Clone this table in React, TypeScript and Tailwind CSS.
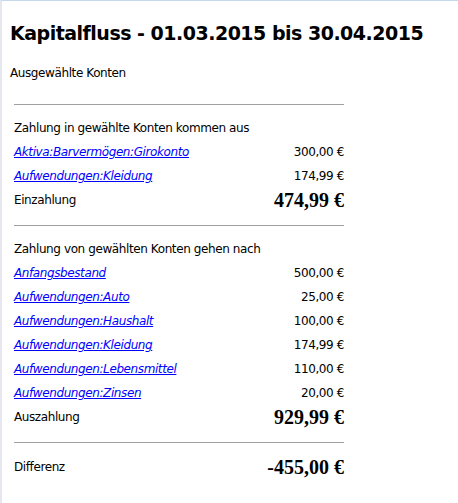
const body = "font-['DejaVu_Sans',Verdana,sans-serif]";

type Row = { name: string; amount: string };

const incoming: Row[] = [
  { name: 'Aktiva:Barvermögen:Girokonto', amount: '300,00 €' },
  { name: 'Aufwendungen:Kleidung', amount: '174,99 €' },
];

const outgoing: Row[] = [
  { name: 'Anfangsbestand', amount: '500,00 €' },
  { name: 'Aufwendungen:Auto', amount: '25,00 €' },
  { name: 'Aufwendungen:Haushalt', amount: '100,00 €' },
  { name: 'Aufwendungen:Kleidung', amount: '174,99 €' },
  { name: 'Aufwendungen:Lebensmittel', amount: '110,00 €' },
  { name: 'Aufwendungen:Zinsen', amount: '20,00 €' },
];

function LinkRow({ row }: { row: Row }) {
  return (
    <div className="flex h-[24px] items-center justify-between">
      <a href="#" className="italic text-[#0000ff] underline">
        {row.name}
      </a>
      <span>{row.amount}</span>
    </div>
  );
}

function TotalRow({ label, amount }: { label: string; amount: string }) {
  return (
    <div className="flex h-[24px] items-center justify-between">
      <span>{label}</span>
      <span className="font-['Liberation_Serif',serif] text-[20px] font-bold tracking-normal">{amount}</span>
    </div>
  );
}

export default function App() {
  return (
    <div className={`h-[503px] w-full overflow-hidden border-t border-l-2 border-t-[#c5d9ee] border-l-[#e6e6ee] bg-white text-black ${body}`}>
      <h1 className="ml-[8px] mt-[20px] whitespace-nowrap text-[19px] font-bold leading-[24px] tracking-[-0.5px]">
        Kapitalfluss - 01.03.2015 bis 30.04.2015
      </h1>
      <p className="ml-[8px] mt-[20px] text-[12px] leading-[16px] tracking-[-0.4px]">Ausgewählte Konten</p>

      <div className="ml-[12px] w-[330px] text-[12px] tracking-[-0.4px]">
        <div className="mt-[23px] h-px bg-[#a0a0a0]" />

        {/* Einzahlungen */}
        <div className="mt-[11px]">
          <div className="flex h-[24px] items-center">Zahlung in gewählte Konten kommen aus</div>
          {incoming.map((r, i) => (
            <LinkRow key={i} row={r} />
          ))}
          <TotalRow label="Einzahlung" amount="474,99 €" />
        </div>

        <div className="mt-[13px] h-px bg-[#a0a0a0]" />

        {/* Auszahlungen */}
        <div className="mt-[11px]">
          <div className="flex h-[24px] items-center">Zahlung von gewählten Konten gehen nach</div>
          {outgoing.map((r, i) => (
            <LinkRow key={i} row={r} />
          ))}
          <TotalRow label="Auszahlung" amount="929,99 €" />
        </div>

        <div className="mt-[13px] h-px bg-[#a0a0a0]" />

        <div className="mt-[12px]">
          <TotalRow label="Differenz" amount="-455,00 €" />
        </div>
      </div>
    </div>
  );
}
